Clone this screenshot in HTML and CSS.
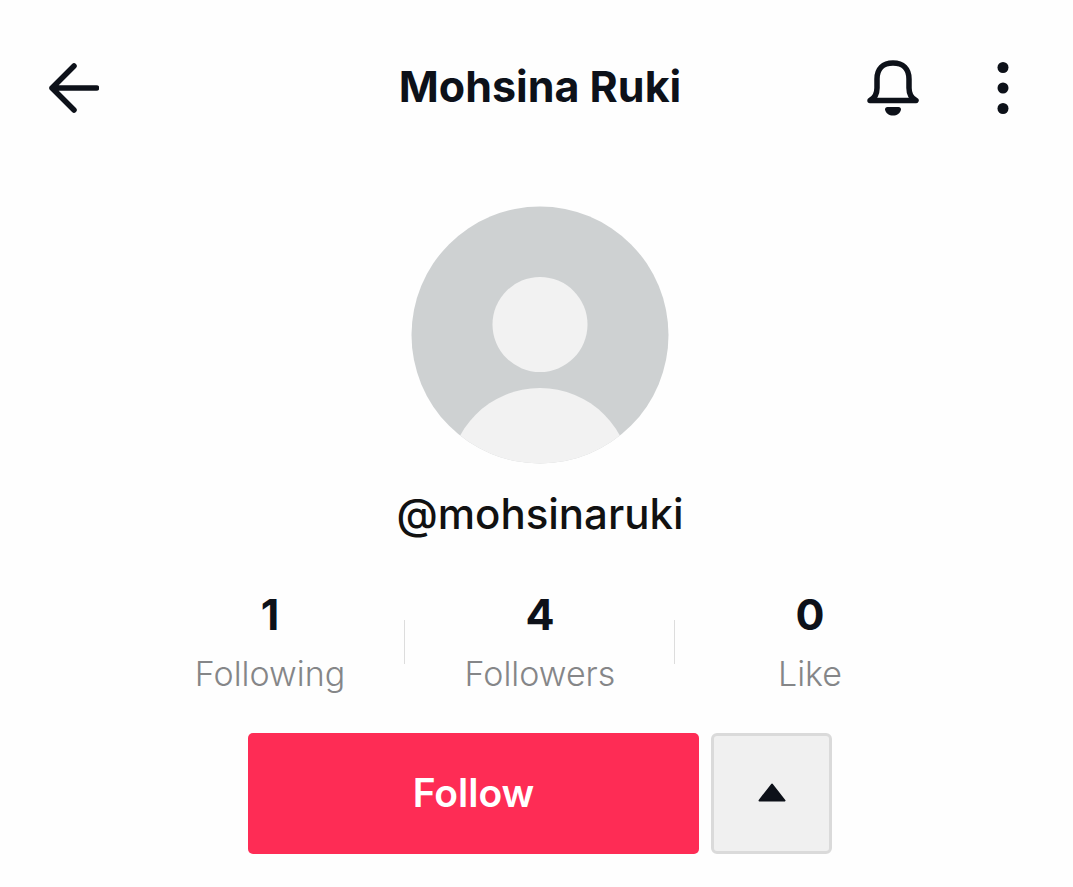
FILE: index.html
```html
<!DOCTYPE html>
<html lang="en">
<head>
<meta charset="utf-8">
<meta name="viewport" content="width=device-width, initial-scale=1">
<title>Mohsina Ruki</title>
<link rel="stylesheet" href="styles.css">
</head>
<body>
<header class="topbar">
  <button class="icon-button" type="button" aria-label="Back">
    <svg width="50" height="50" viewBox="0 0 50 50" fill="none" stroke="currentColor" stroke-width="5.500" stroke-linecap="round" stroke-linejoin="round"><path d="M25 3 3 25l22 22M3 25h44.500"/></svg>
  </button>
  <h1 class="title">Mohsina Ruki</h1>
  <div class="actions">
    <button class="icon-button" type="button" aria-label="Notifications">
      <svg width="52" height="56" viewBox="0 0 52 56"><path d="M3 40.500Q10 37 10 28V19C10 9 16 3 26 3S42 9 42 19V28Q42 37 49 40.500Z" fill="none" stroke="currentColor" stroke-width="5.500" stroke-linejoin="round"/><path d="M20.500 47H31.500Q34 47 34 49.500C33 53.500 30 55.500 26 55.500S19 53.500 18 49.500Q18 47 20.500 47Z" fill="currentColor"/></svg>
    </button>
    <button class="icon-button" type="button" aria-label="More options">
      <svg width="56" height="56" viewBox="0 0 56 56" fill="currentColor"><circle cx="28" cy="7.500" r="5.500"/><circle cx="28" cy="28" r="5.500"/><circle cx="28" cy="48.500" r="5.500"/></svg>
    </button>
  </div>
</header>
<main class="profile">
  <svg class="avatar" viewBox="0 0 258 258" role="img" aria-label="Profile picture">
    <clipPath id="round"><circle cx="129" cy="129" r="128.500"/></clipPath>
    <g clip-path="url(#round)">
      <rect width="258" height="258" fill="#ced1d2"/>
      <circle cx="129" cy="118.500" r="47.500" fill="#f2f2f2"/>
      <circle cx="129" cy="273" r="91" fill="#f2f2f2"/>
    </g>
  </svg>
  <p class="handle">@mohsinaruki</p>
  <ul class="stats">
    <li class="stat"><strong class="count">1</strong><span class="label">Following</span></li>
    <li class="stat"><strong class="count">4</strong><span class="label">Followers</span></li>
    <li class="stat"><strong class="count">0</strong><span class="label">Like</span></li>
  </ul>
  <div class="buttons">
    <button class="follow" type="button">Follow</button>
    <button class="suggest" type="button" aria-label="Suggested accounts">
      <svg width="28" height="24" viewBox="0 0 28 24"><path d="M14 2.500 26.500 18.500H1.500Z" fill="currentColor" stroke="currentColor" stroke-width="2" stroke-linejoin="round"/></svg>
    </button>
  </div>
</main>
</body>
</html>
```
FILE: styles.css
```css
* {
  box-sizing: border-box;
}

body {
  margin: 0;
  padding: 56px 0 32px 7px;
  background: #fefefe;
  color: #0d1119;
  font-family: Inter, "Liberation Sans", sans-serif;
}

button {
  padding: 0;
  border: 0;
  background: none;
  color: inherit;
  font: inherit;
  cursor: pointer;
}

svg {
  display: block;
}

.topbar {
  display: grid;
  grid-template-columns: 1fr auto 1fr;
  align-items: center;
  height: 64px;
  padding: 0 42px;
}

.icon-button {
  justify-self: start;
}

.title {
  margin: 0;
  padding-bottom: 4px;
  font-size: 43px;
  line-height: 60px;
  font-weight: 700;
}

.actions {
  display: flex;
  justify-content: flex-end;
  gap: 56px;
}

.profile {
  display: flex;
  flex-direction: column;
  align-items: center;
  padding-top: 86px;
}

.avatar {
  width: 258px;
}

.handle {
  margin: 20px 0 0;
  color: #111111;
  font-size: 42px;
  line-height: 60px;
  font-weight: 500;
}

.stats {
  display: grid;
  grid-template-columns: repeat(3, 270px);
  margin: 40px 0 0;
  padding: 0;
  list-style: none;
}

.stat {
  display: flex;
  flex-direction: column;
  align-items: center;
  gap: 4px;
  background: linear-gradient(#dddddd, #dddddd) no-repeat right 36px / 1px 44px;
}

.stat:last-child {
  background: none;
}

.count {
  font-size: 43px;
  line-height: 60px;
  font-weight: 700;
}

.label {
  color: #858688;
  font-size: 34px;
  line-height: 52px;
  font-weight: 300;
}

.buttons {
  display: grid;
  grid-template-columns: 451px 121px;
  gap: 12px;
  height: 121px;
  margin-top: 33px;
}

.follow {
  padding-bottom: 2px;
  border-radius: 5px;
  background: #fe2c55;
  color: #ffffff;
  font-size: 39px;
  font-weight: 600;
}

.suggest {
  display: flex;
  align-items: center;
  justify-content: center;
  border: 3px solid #dadada;
  border-radius: 6px;
  background: #f0f0f0;
}
```
